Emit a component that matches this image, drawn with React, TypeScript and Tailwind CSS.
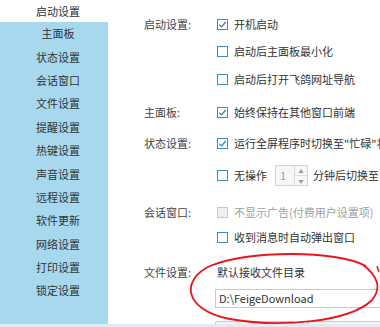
import React from 'react';

const navItems = [
  '主面板',
  '状态设置',
  '会话窗口',
  '文件设置',
  '提醒设置',
  '热键设置',
  '声音设置',
  '远程设置',
  '软件更新',
  '网络设置',
  '打印设置',
  '锁定设置',
];

function CheckBox({ checked = false, disabled = false }: { checked?: boolean; disabled?: boolean }) {
  return (
    <span
      className={`flex h-[11px] w-[11px] shrink-0 items-center justify-center border ${
        disabled ? 'border-[#c8c8c8] bg-[#efefef]' : 'border-[#3a8cc6] bg-white'
      }`}
    >
      {checked && (
        <svg viewBox="0 0 10 10" className="h-[9px] w-[9px]">
          <path d="M1.5 5.2 L4 7.6 L8.6 2.2" fill="none" stroke="#2f7fb8" strokeWidth="1.4" />
        </svg>
      )}
    </span>
  );
}

function Option({
  text,
  checked,
  disabled,
  className = '',
}: {
  text: string;
  checked?: boolean;
  disabled?: boolean;
  className?: string;
}) {
  return (
    <div className={`flex h-[20px] shrink-0 items-center ${className}`}>
      <span className="w-[73px] shrink-0" />
      <CheckBox checked={checked} disabled={disabled} />
      <span className={`ml-[6px] whitespace-nowrap ${disabled ? 'text-[#a0a0a0]' : 'text-[#333]'}`}>{text}</span>
    </div>
  );
}

function Row({ label, children, className = '' }: { label: string; children: React.ReactNode; className?: string }) {
  return (
    <div className={`flex h-[20px] shrink-0 items-center ${className}`}>
      <span className="w-[73px] shrink-0 whitespace-nowrap text-[#444]">{label}</span>
      {children}
    </div>
  );
}

export default function App() {
  return (
    <div
      className="relative h-[327px] w-[380px] overflow-hidden bg-white text-[11px] leading-none"
      style={{ fontFamily: '"Noto Sans CJK SC", "Noto Sans", sans-serif' }}
    >
      <div className="flex h-[324px] overflow-hidden">
        {/* left nav */}
        <div className="flex w-[108px] shrink-0 flex-col">
          <div className="flex h-[22px] shrink-0 items-center justify-center bg-white pl-[8px] text-[#333]">启动设置</div>
          <div className="flex flex-1 flex-col bg-[#a8d8ee]">
            {navItems.map((item) => (
              <div key={item} className="flex h-[23.4px] shrink-0 items-center justify-center pl-[8px] text-[#333]">
                {item}
              </div>
            ))}
          </div>
        </div>

        {/* settings */}
        <div className="flex min-w-0 flex-1 flex-col pl-[36px]">
          <Row label="启动设置:" className="mt-[14px]">
            <CheckBox checked />
            <span className="ml-[6px] text-[#333]">开机启动</span>
          </Row>
          <Option text="启动后主面板最小化" className="mt-[7px]" />
          <Option text="启动后打开飞鸽网址导航" className="mt-[8px]" />

          <Row label="主面板:" className="mt-[13px]">
            <CheckBox checked />
            <span className="ml-[6px] whitespace-nowrap text-[#333]">始终保持在其他窗口前端</span>
          </Row>

          <Row label="状态设置:" className="mt-[11px]">
            <CheckBox checked />
            <span className="ml-[6px] whitespace-nowrap text-[#333]">运行全屏程序时切换至"忙碌"状态</span>
          </Row>
          <div className="mt-[11px] flex h-[22px] shrink-0 items-center">
            <span className="w-[73px] shrink-0" />
            <CheckBox />
            <span className="ml-[6px] shrink-0 whitespace-nowrap text-[#333]">无操作</span>
            <div className="ml-[8px] flex h-[21px] w-[33px] shrink-0 border border-[#d4d4d4] bg-[#f7f7f7]">
              <span className="flex flex-1 items-center pl-[4px] text-[#999]">1</span>
              <div className="flex w-[13px] flex-col border-l border-[#dcdcdc]">
                <span className="flex flex-1 items-center justify-center border-b border-[#dcdcdc] text-[5px] text-[#999]">▲</span>
                <span className="flex flex-1 items-center justify-center text-[5px] text-[#999]">▼</span>
              </div>
            </div>
            <span className="ml-[5px] shrink-0 whitespace-nowrap text-[#333]">分钟后切换至"离开"状态</span>
          </div>

          <Row label="会话窗口:" className="mt-[16px]">
            <CheckBox disabled />
            <span className="ml-[6px] whitespace-nowrap text-[#a0a0a0]">不显示广告(付费用户设置项)</span>
          </Row>
          <Option text="收到消息时自动弹出窗口" className="mt-[5px]" />

          <Row label="文件设置:" className="mt-[15px]">
            <span className="whitespace-nowrap text-[#333]">默认接收文件目录</span>
          </Row>
          <div className="mt-[7px] flex shrink-0">
            <span className="w-[71px] shrink-0" />
            <div className="flex h-[19px] w-[200px] shrink-0 items-center border border-[#c9c9c9] pl-[3px] text-[#333]">
              D:\FeigeDownload
            </div>
          </div>
          <div className="mt-[13px] flex shrink-0">
            <span className="w-[71px] shrink-0" />
            <div className="h-[10px] w-[80px] shrink-0 rounded-[2px] border border-[#c9c9c9] bg-[#f4f4f4]" />
            <div className="ml-[12px] h-[10px] w-[80px] shrink-0 rounded-[2px] border border-[#c9c9c9] bg-[#f4f4f4]" />
          </div>
        </div>
      </div>
      <div className="h-[3px] bg-[#dcedf6]" />

      {/* red annotation */}
      <svg className="pointer-events-none absolute left-0 top-0" width="380" height="327">
        <path
          d="M 366 266 C 336 250, 250 250, 210 266 C 180 280, 184 310, 230 319 C 280 328, 350 322, 372 300 C 382 288, 378 276, 362 264"
          fill="none"
          stroke="#e8161b"
          strokeWidth="1.8"
        />
        <path d="M 377 266 L 379 272" fill="none" stroke="#e8161b" strokeWidth="1.5" />
      </svg>
    </div>
  );
}
